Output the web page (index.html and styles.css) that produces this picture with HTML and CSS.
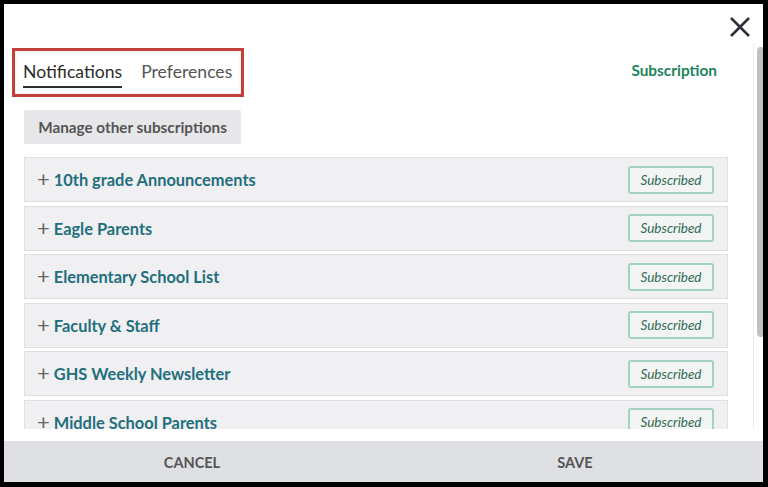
FILE: index.html
```html
<!DOCTYPE html>
<html lang="en">
<head>
<meta charset="utf-8">
<title>Subscriptions</title>
<link rel="stylesheet" href="styles.css">
</head>
<body>
<div class="modal">
  <div class="modal-head">
    <button class="close" aria-label="Close">
      <svg viewBox="0 0 22 22" width="22" height="22"><path d="M2 2 L20 20 M20 2 L2 20" stroke="#2f3138" stroke-width="2.6" stroke-linecap="butt"/></svg>
    </button>
  </div>
  <div class="modal-body">
    <div class="content">
      <div class="top-row">
        <div class="tabs">
          <span class="tab active">Notifications</span>
          <span class="tab">Preferences</span>
        </div>
        <span class="sub-link">Subscription</span>
      </div>
      <button class="manage">Manage other subscriptions</button>
      <ul class="list">
        <li class="row"><span class="name"><span class="plus">+</span>10th grade Announcements</span><span class="badge">Subscribed</span></li>
        <li class="row"><span class="name"><span class="plus">+</span>Eagle Parents</span><span class="badge">Subscribed</span></li>
        <li class="row"><span class="name"><span class="plus">+</span>Elementary School List</span><span class="badge">Subscribed</span></li>
        <li class="row"><span class="name"><span class="plus">+</span>Faculty &amp; Staff</span><span class="badge">Subscribed</span></li>
        <li class="row"><span class="name"><span class="plus">+</span>GHS Weekly Newsletter</span><span class="badge">Subscribed</span></li>
        <li class="row"><span class="name"><span class="plus">+</span>Middle School Parents</span><span class="badge">Subscribed</span></li>
      </ul>
    </div>
    <div class="scrollbar"><div class="thumb"></div></div>
  </div>
  <div class="modal-foot">
    <button class="foot-btn">Cancel</button>
    <button class="foot-btn save">Save</button>
  </div>
</div>
</body>
</html>
```
FILE: styles.css
```css
html, body {
  margin: 0;
  padding: 0;
  background: #000;
  height: 100%;
}
body {
  font-family: Lato, "Open Sans", sans-serif;
}
.modal {
  margin: 4px 5px 5px 4px;
  width: 759px;
  height: 478px;
  background: #fff;
  display: flex;
  flex-direction: column;
}
.modal-head {
  height: 39px;
  display: flex;
  justify-content: flex-end;
  flex: none;
}
.close {
  border: 0;
  background: transparent;
  padding: 0;
  margin: 12px 12px 0 0;
  width: 22px;
  height: 22px;
  cursor: pointer;
}
.close svg { display: block; }
.modal-body {
  flex: none;
  height: 386px;
  display: flex;
  overflow: hidden;
}
.content {
  flex: 1;
  overflow: hidden;
  padding: 5px 25px 0 8px;
}
.top-row {
  display: flex;
  align-items: center;
  justify-content: space-between;
}
.tabs {
  display: flex;
  gap: 19px;
  border: 3px solid #c4403a;
  margin: 0;
  box-sizing: border-box;
  width: 232px;
  height: 49px;
  padding: 10px 0 0 8px;
  box-shadow: inset 0 0 2px 1px #f0f0f0;
}
.tab {
  font-size: 17.6px;
  color: #555;
  line-height: 22px;
  height: 25px;
}
.tab.active {
  color: #2d2d2d;
  border-bottom: 2px solid #2d2d2d;
}
.sub-link {
  color: #22845a;
  font-weight: bold;
  font-size: 15.4px;
  margin-right: 11px;
  margin-top: -6px;
}
.manage {
  display: block;
  margin: 13px 0 0 12px;
  width: 217px;
  height: 34px;
  border: 0;
  border-radius: 2px;
  background: #e7e7e9;
  color: #555;
  font-family: inherit;
  font-weight: bold;
  font-size: 15.3px;
  padding: 0;
}
.list {
  list-style: none;
  margin: 13px 0 0 12px;
  padding: 0;
  display: flex;
  flex-direction: column;
  gap: 3.6px;
}
.row {
  height: 45px;
  box-sizing: border-box;
  border: 1px solid #dfdfe2;
  background: #f0f0f2;
  display: flex;
  align-items: center;
  justify-content: space-between;
  padding: 0 13px 0 12px;
  flex: none;
}
.name {
  color: #1f6f7d;
  font-weight: bold;
  font-size: 16.4px;
  display: flex;
  align-items: center;
  margin-top: 0;
}
.plus {
  color: #666;
  font-weight: normal;
  font-size: 22px;
  margin-right: 4px;
  line-height: 1;
  margin-top: -1px;
}
.badge {
  box-sizing: border-box;
  width: 86px;
  height: 28px;
  border: 2px solid #a2d3c1;
  border-radius: 3px;
  color: #2f6b50;
  font-style: italic;
  font-size: 13.5px;
  display: flex;
  align-items: center;
  justify-content: center;
  background: #f3f4f4;
}
.scrollbar {
  flex: none;
  width: 10px;
  border-left: 1px solid #ececec;
  padding: 4px 0 0 3px;
  box-sizing: border-box;
}
.thumb {
  width: 7px;
  height: 290px;
  background: #c1c1c1;
  border-radius: 4px 0 0 4px;
}
.modal-foot {
  margin-top: 12px;
  flex: 1;
  background: #dfe0e4;
  display: flex;
}
.foot-btn {
  flex: 1;
  border: 0;
  background: transparent;
  font-family: inherit;
  font-weight: bold;
  font-size: 14.5px;
  color: #555;
  text-transform: uppercase;
  padding: 2px 0 0 0;
}
.foot-btn.save {
  padding-left: 7px;
}
```
